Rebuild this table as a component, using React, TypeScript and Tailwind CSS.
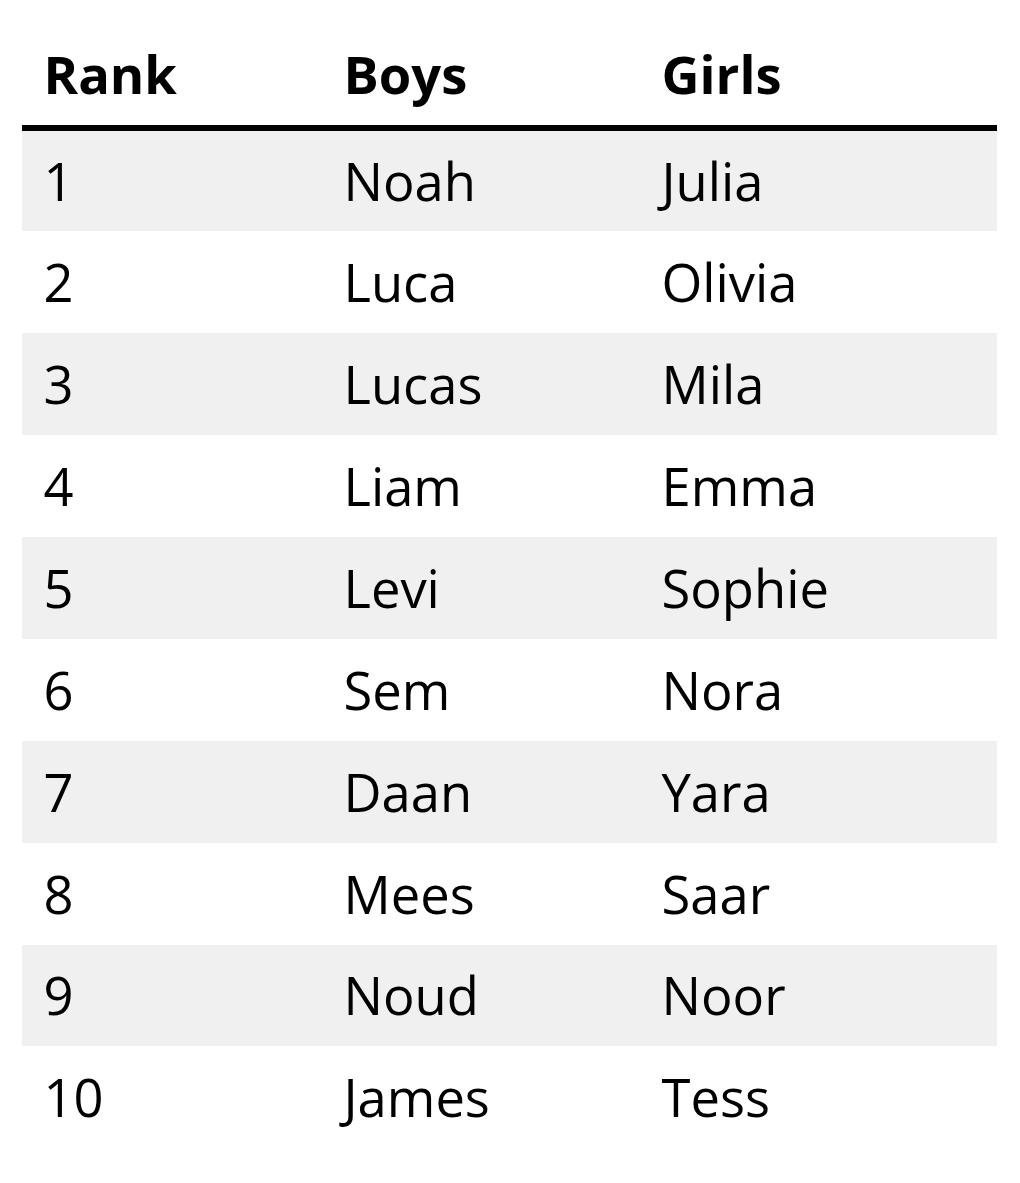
import React from "react";

const rows: [string, string, string][] = [
  ["1", "Noah", "Julia"],
  ["2", "Luca", "Olivia"],
  ["3", "Lucas", "Mila"],
  ["4", "Liam", "Emma"],
  ["5", "Levi", "Sophie"],
  ["6", "Sem", "Nora"],
  ["7", "Daan", "Yara"],
  ["8", "Mees", "Saar"],
  ["9", "Noud", "Noor"],
  ["10", "James", "Tess"],
];

export default function App() {
  return (
    <div className="bg-white min-h-[1183px] pt-[23px] pl-[21.5px]" style={{ fontFamily: '"Open Sans", sans-serif' }}>
      <table className="w-[975px] border-collapse table-fixed text-black text-[52.5px] leading-[78px]">
        <thead>
          <tr className="border-b-[6.5px] border-black">
            <th className="w-[300px] h-[105px] pl-[22px] text-left font-bold align-middle">Rank</th>
            <th className="w-[318px] h-[105px] pl-[22px] text-left font-bold align-middle">Boys</th>
            <th className="h-[105px] pl-[22px] text-left font-bold align-middle">Girls</th>
          </tr>
        </thead>
        <tbody>
          {rows.map((r, i) => {
            const h = i === 0 ? "h-[103.3px]" : "h-[101.9px]";
            return (
              <tr key={r[0]} className={i % 2 === 0 ? "bg-[#f0f0f0]" : "bg-white"}>
                <td className={`${h} pl-[22px] align-middle font-normal`}>{r[0]}</td>
                <td className={`${h} pl-[22px] align-middle font-normal`}>{r[1]}</td>
                <td className={`${h} pl-[22px] align-middle font-normal`}>{r[2]}</td>
              </tr>
            );
          })}
        </tbody>
      </table>
    </div>
  );
}
